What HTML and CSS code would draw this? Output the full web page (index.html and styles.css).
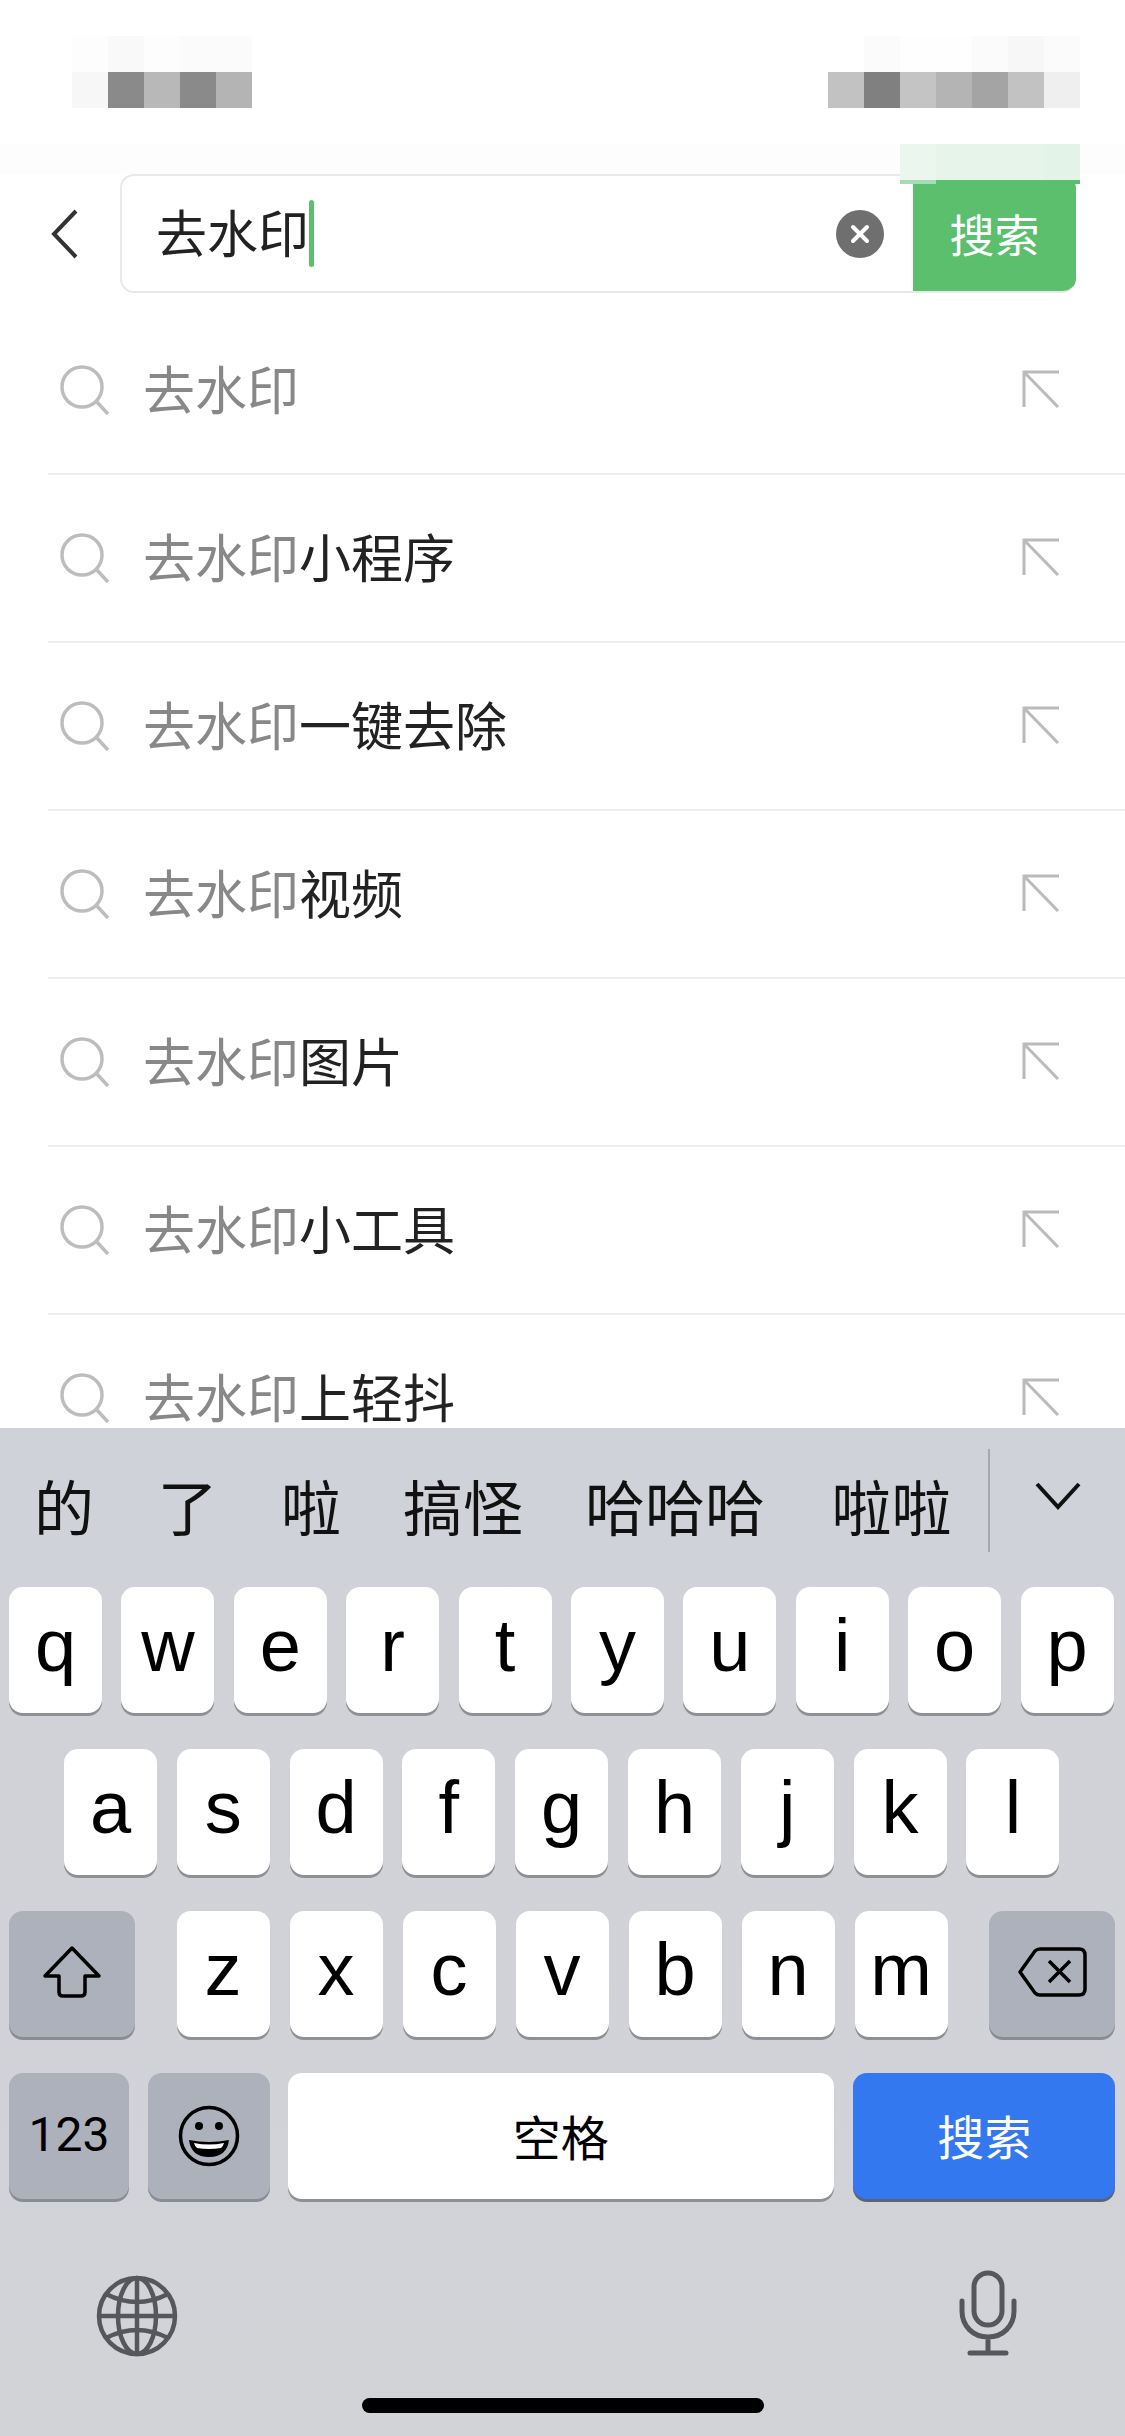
FILE: index.html
```html
<!DOCTYPE html>
<html lang="zh-CN">
  <head>
    <meta charset="UTF-8" />
    <meta name="viewport" content="width=device-width, initial-scale=1.0" />
    <title>搜索</title>
    <link rel="stylesheet" href="styles.css">
  </head>
  <body>
    <div class="status">
      <div class="mosaic mosaic-left"><i></i><i></i></div>
      <div class="mosaic mosaic-right"><i></i><i></i></div>
    </div>

    <div class="searchbar">
      <div class="mosaic-green"></div>
      <svg class="back" width="27" height="50" viewBox="0 0 27 50"><path d="M25 2 3 25l22 23" fill="none" stroke="#333" stroke-width="4"/></svg>
      <div class="field">
        <span class="query">去水印</span>
        <span class="cursor"></span>
        <svg class="clear" width="48" height="48" viewBox="0 0 48 48"><circle cx="24" cy="24" r="24" fill="#6f6f6f"/><path d="M17 17l14 14M31 17 17 31" stroke="#fff" stroke-width="4" stroke-linecap="round"/></svg>
        <div class="go">搜索</div>
      </div>
    </div>

    <ul class="list">
      <li class="item">
        <svg class="icon-search" width="50" height="50" viewBox="0 0 50 50"><circle cx="22" cy="22" r="20" fill="none" stroke="#bdbdbd" stroke-width="3.5"/><path d="M36 36l12 13" stroke="#bdbdbd" stroke-width="3.5"/></svg>
        <span class="word"><em>去水印</em></span>
        <svg class="icon-fill" width="38" height="38" viewBox="0 0 38 38"><path d="M37 2H2v35M2 2l34 35" fill="none" stroke="#bbb" stroke-width="3"/></svg>
      </li>
      <li class="item">
        <svg class="icon-search" width="50" height="50" viewBox="0 0 50 50"><circle cx="22" cy="22" r="20" fill="none" stroke="#bdbdbd" stroke-width="3.5"/><path d="M36 36l12 13" stroke="#bdbdbd" stroke-width="3.5"/></svg>
        <span class="word"><em>去水印</em>小程序</span>
        <svg class="icon-fill" width="38" height="38" viewBox="0 0 38 38"><path d="M37 2H2v35M2 2l34 35" fill="none" stroke="#bbb" stroke-width="3"/></svg>
      </li>
      <li class="item">
        <svg class="icon-search" width="50" height="50" viewBox="0 0 50 50"><circle cx="22" cy="22" r="20" fill="none" stroke="#bdbdbd" stroke-width="3.5"/><path d="M36 36l12 13" stroke="#bdbdbd" stroke-width="3.5"/></svg>
        <span class="word"><em>去水印</em>一键去除</span>
        <svg class="icon-fill" width="38" height="38" viewBox="0 0 38 38"><path d="M37 2H2v35M2 2l34 35" fill="none" stroke="#bbb" stroke-width="3"/></svg>
      </li>
      <li class="item">
        <svg class="icon-search" width="50" height="50" viewBox="0 0 50 50"><circle cx="22" cy="22" r="20" fill="none" stroke="#bdbdbd" stroke-width="3.5"/><path d="M36 36l12 13" stroke="#bdbdbd" stroke-width="3.5"/></svg>
        <span class="word"><em>去水印</em>视频</span>
        <svg class="icon-fill" width="38" height="38" viewBox="0 0 38 38"><path d="M37 2H2v35M2 2l34 35" fill="none" stroke="#bbb" stroke-width="3"/></svg>
      </li>
      <li class="item">
        <svg class="icon-search" width="50" height="50" viewBox="0 0 50 50"><circle cx="22" cy="22" r="20" fill="none" stroke="#bdbdbd" stroke-width="3.5"/><path d="M36 36l12 13" stroke="#bdbdbd" stroke-width="3.5"/></svg>
        <span class="word"><em>去水印</em>图片</span>
        <svg class="icon-fill" width="38" height="38" viewBox="0 0 38 38"><path d="M37 2H2v35M2 2l34 35" fill="none" stroke="#bbb" stroke-width="3"/></svg>
      </li>
      <li class="item">
        <svg class="icon-search" width="50" height="50" viewBox="0 0 50 50"><circle cx="22" cy="22" r="20" fill="none" stroke="#bdbdbd" stroke-width="3.5"/><path d="M36 36l12 13" stroke="#bdbdbd" stroke-width="3.5"/></svg>
        <span class="word"><em>去水印</em>小工具</span>
        <svg class="icon-fill" width="38" height="38" viewBox="0 0 38 38"><path d="M37 2H2v35M2 2l34 35" fill="none" stroke="#bbb" stroke-width="3"/></svg>
      </li>
      <li class="item">
        <svg class="icon-search" width="50" height="50" viewBox="0 0 50 50"><circle cx="22" cy="22" r="20" fill="none" stroke="#bdbdbd" stroke-width="3.5"/><path d="M36 36l12 13" stroke="#bdbdbd" stroke-width="3.5"/></svg>
        <span class="word"><em>去水印</em>上轻抖</span>
        <svg class="icon-fill" width="38" height="38" viewBox="0 0 38 38"><path d="M37 2H2v35M2 2l34 35" fill="none" stroke="#bbb" stroke-width="3"/></svg>
      </li>
    </ul>

    <div class="keyboard">
      <div class="candidates">
        <span class="cand cand1">的</span>
        <span class="cand cand2">了</span>
        <span class="cand cand3">啦</span>
        <span class="cand cand4">搞怪</span>
        <span class="cand cand5">哈哈哈</span>
        <span class="cand cand6">啦啦</span>
        <div class="more">
          <svg width="46" height="28" viewBox="0 0 46 28"><path d="M2 2l21 23L44 2" fill="none" stroke="#111" stroke-width="4"/></svg>
        </div>
      </div>

      <div class="row row1">
        <div class="key">q</div><div class="key">w</div><div class="key">e</div><div class="key">r</div><div class="key">t</div>
        <div class="key">y</div><div class="key">u</div><div class="key">i</div><div class="key">o</div><div class="key">p</div>
      </div>
      <div class="row row2">
        <div class="key">a</div><div class="key">s</div><div class="key">d</div><div class="key">f</div><div class="key">g</div>
        <div class="key">h</div><div class="key">j</div><div class="key">k</div><div class="key">l</div>
      </div>
      <div class="row row3">
        <div class="key dark shift">
          <svg width="60" height="54" viewBox="0 0 60 54"><path d="M30 3 3 31h14v16q0 4 4 4h18q4 0 4-4V31h14z" fill="none" stroke="#000" stroke-width="3.5" stroke-linejoin="round"/></svg>
        </div>
        <div class="letters">
          <div class="key">z</div><div class="key">x</div><div class="key">c</div><div class="key">v</div>
          <div class="key">b</div><div class="key">n</div><div class="key">m</div>
        </div>
        <div class="key dark del">
          <svg width="70" height="52" viewBox="0 0 70 52"><path d="M23 3h39q6 0 6 6v34q0 6-6 6H23q-3 0-5-2L3 26 18 5q2-2 5-2z" fill="none" stroke="#000" stroke-width="3.5" stroke-linejoin="round"/><path d="M32 15l21 21M53 15 32 36" stroke="#000" stroke-width="3.5"/></svg>
        </div>
      </div>
      <div class="row row4">
        <div class="key dark num">123</div>
        <div class="key dark emoji">
          <svg width="62" height="62" viewBox="0 0 62 62"><circle cx="31" cy="31" r="28.5" fill="none" stroke="#000" stroke-width="3.5"/><circle cx="21" cy="21" r="4" fill="#000"/><circle cx="41" cy="21" r="4" fill="#000"/><path d="M11 35q20 4 40 0-2 17-20 17T11 35z" fill="#000"/><path d="M16 38q15 3 30 0-1 4-3 5-12 2-24 0-2-1-3-5z" fill="#fff"/></svg>
        </div>
        <div class="key space">空格</div>
        <div class="key enter">搜索</div>
      </div>

      <div class="tools">
        <svg width="82" height="82" viewBox="0 0 82 82" fill="none" stroke="#55575c" stroke-width="4.5"><circle cx="41" cy="41" r="38"/><ellipse cx="41" cy="41" rx="19" ry="38"/><path d="M41 3v76M3 41h76M10 19q31 16 62 0M10 63q31-16 62 0"/></svg>
        <svg class="mic" width="58" height="86" viewBox="0 0 58 86" fill="none" stroke="#55575c" stroke-width="5" stroke-linecap="round"><rect x="15" y="3" width="28" height="52" rx="14"/><path d="M3 31v10c0 15 11 26 26 26s26-11 26-26V31M29 67v16M11 83h36"/></svg>
      </div>
      <div class="homebar"></div>
    </div>
  </body>
</html>
```

FILE: styles.css
```css
* {
  margin: 0;
  padding: 0;
  box-sizing: border-box;
}

html {
  font-size: 50px;
}

body {
  width: 1125px;
  height: 2436px;
  display: flex;
  flex-direction: column;
  overflow: hidden;
  background-color: #fff;
  font-family: 'Liberation Sans', 'Noto Sans CJK SC', sans-serif;
}

/* 状态栏打码 */
.status {
  height: 144px;
  padding: 36px 45px 0 72px;
  display: flex;
  justify-content: space-between;
}

.mosaic i {
  display: block;
  height: 36px;
}

.mosaic-left {
  width: 180px;
}

.mosaic-left i:first-child {
  background: linear-gradient(90deg, #fdfdfd 36px, #f9f9f9 36px 72px, #fdfdfd 72px 108px, #fbfbfb 108px);
}

.mosaic-left i:last-child {
  background: linear-gradient(90deg, #f7f7f7 36px, #8a8a8a 36px 72px, #b8b8b8 72px 108px, #8a8a8a 108px 144px, #b4b4b4 144px);
}

.mosaic-right {
  width: 252px;
}

.mosaic-right i:first-child {
  background: linear-gradient(90deg, #fff 36px, #fbfbfb 36px 72px, #fefefe 72px 144px, #fbfbfb 144px 180px, #f7f7f7 180px 216px, #fbfbfb 216px);
}

.mosaic-right i:last-child {
  background: linear-gradient(90deg, #c2c2c2 36px, #808080 36px 72px, #c4c4c4 72px 108px, #b4b4b4 108px 144px, #a4a4a4 144px 180px, #c2c2c2 180px 216px, #efefef 216px);
}

/* 搜索栏 */
.searchbar {
  position: relative;
  height: 149px;
  padding: 30px 49px 0 51px;
  display: flex;
  align-items: flex-start;
  background: linear-gradient(#fdfdfd 30px, #fff 30px);
}

.back {
  flex: none;
  margin: 35px 42px 0 0;
}

.field {
  flex: 1;
  height: 119px;
  display: flex;
  align-items: center;
  padding-left: 34px;
  background-color: #fff;
  border: 2px solid #e9e9e9;
  border-right: 0;
  border-radius: 14px;
  overflow: hidden;
}

.query {
  font-size: 51px;
  line-height: 60px;
  margin-top: 4px;
  color: #222;
}

.cursor {
  width: 5px;
  height: 67px;
  margin-left: 0;
  border-radius: 3px;
  background-color: #5bbf6d;
}

.clear {
  margin-left: auto;
  margin-right: 29px;
}

.go {
  width: 163px;
  height: 100%;
  display: flex;
  align-items: center;
  justify-content: center;
  background-color: #5bbf6d;
  color: #fff;
  font-size: 45px;
}

.mosaic-green {
  position: absolute;
  top: 0;
  right: 45px;
  width: 180px;
  height: 40px;
  background:
    linear-gradient(90deg, #a6dcb5 36px, #5bbf6d 36px) bottom / 100% 4px no-repeat,
    linear-gradient(90deg, #eaf6ee 36px, #e6f4ea 36px 144px, #e4f3e8 144px);
}

/* 联想列表 */
.list {
  flex: 1;
  min-height: 0;
  overflow: hidden;
  list-style: none;
  padding: 14px 0 0 48px;
}

.item {
  height: 168px;
  display: flex;
  align-items: center;
  padding: 0 65px 0 12px;
  border-bottom: 2px solid #ececec;
}

.icon-search {
  flex: none;
  margin-right: 33px;
}

.word {
  flex: 1;
  font-size: 52px;
  line-height: 60px;
  margin-top: 3px;
  color: #222;
}

.word em {
  font-style: normal;
  color: #888;
}

.icon-fill {
  margin-top: -2px;
}

/* 键盘 */
.keyboard {
  flex: none;
  position: relative;
  height: 1008px;
  background: linear-gradient(#d0d2d9, #d2d3d7);
}

.candidates {
  height: 159px;
  display: flex;
  align-items: center;
  padding-left: 34px;
  font-size: 60px;
  color: #111;
}

.cand {
  flex: none;
  margin-top: 6px;
  line-height: 80px;
}

.cand2 {
  margin-left: 63.5px;
}

.cand3 {
  margin-left: 63.5px;
}

.cand4 {
  margin-left: 62px;
}

.cand5 {
  margin-left: 62px;
}

.cand6 {
  margin-left: 66.5px;
}

.more {
  margin-left: auto;
  width: 137px;
  height: 103px;
  margin-top: -14px;
  padding: 33px 0 0 45px;
  border-left: 2px solid #a6a8ae;
}

.more svg {
  display: block;
}

.row {
  height: 129px;
  margin-bottom: 33px;
  display: flex;
  gap: 19.4px;
  padding: 0 9px;
}

.row2 {
  padding-left: 64px;
  gap: 19.8px;
}

.row3,
.row4 {
  padding: 0 10px 0 9px;
}

.row3 {
  justify-content: space-between;
}

.letters {
  display: flex;
  gap: 20px;
}

.key {
  flex: none;
  width: 93px;
  height: 126px;
  display: flex;
  align-items: center;
  justify-content: center;
  padding-bottom: 10px;
  background-color: #fff;
  border-radius: 14px;
  box-shadow: 0 3px 0 #8e9096;
  font-size: 74px;
  color: #000;
}

.dark {
  background-color: #adb1bb;
  box-shadow: 0 3px 0 #888c94;
}

.shift,
.del {
  width: 126px;
  padding-bottom: 4px;
}

.num {
  width: 120px;
  padding-bottom: 3px;
  font-size: 48px;
  font-family: Roboto, 'Liberation Sans', sans-serif;
}

.emoji {
  width: 122px;
  padding-bottom: 0;
}

.space {
  width: 546px;
  margin-left: -2px;
  padding-bottom: 3px;
  font-size: 48px;
}

.enter {
  width: 262px;
  padding-bottom: 3px;
  background-color: #3478f0;
  box-shadow: 0 3px 0 #5a6472;
  color: #fff;
  font-size: 47px;
}

.tools {
  display: flex;
  justify-content: space-between;
  align-items: flex-start;
  padding: 40px 108px 0 96px;
}

.mic {
  margin-top: -5px;
}

.homebar {
  position: absolute;
  left: 362px;
  bottom: 23px;
  width: 402px;
  height: 15px;
  border-radius: 8px;
  background-color: #000;
}
```
